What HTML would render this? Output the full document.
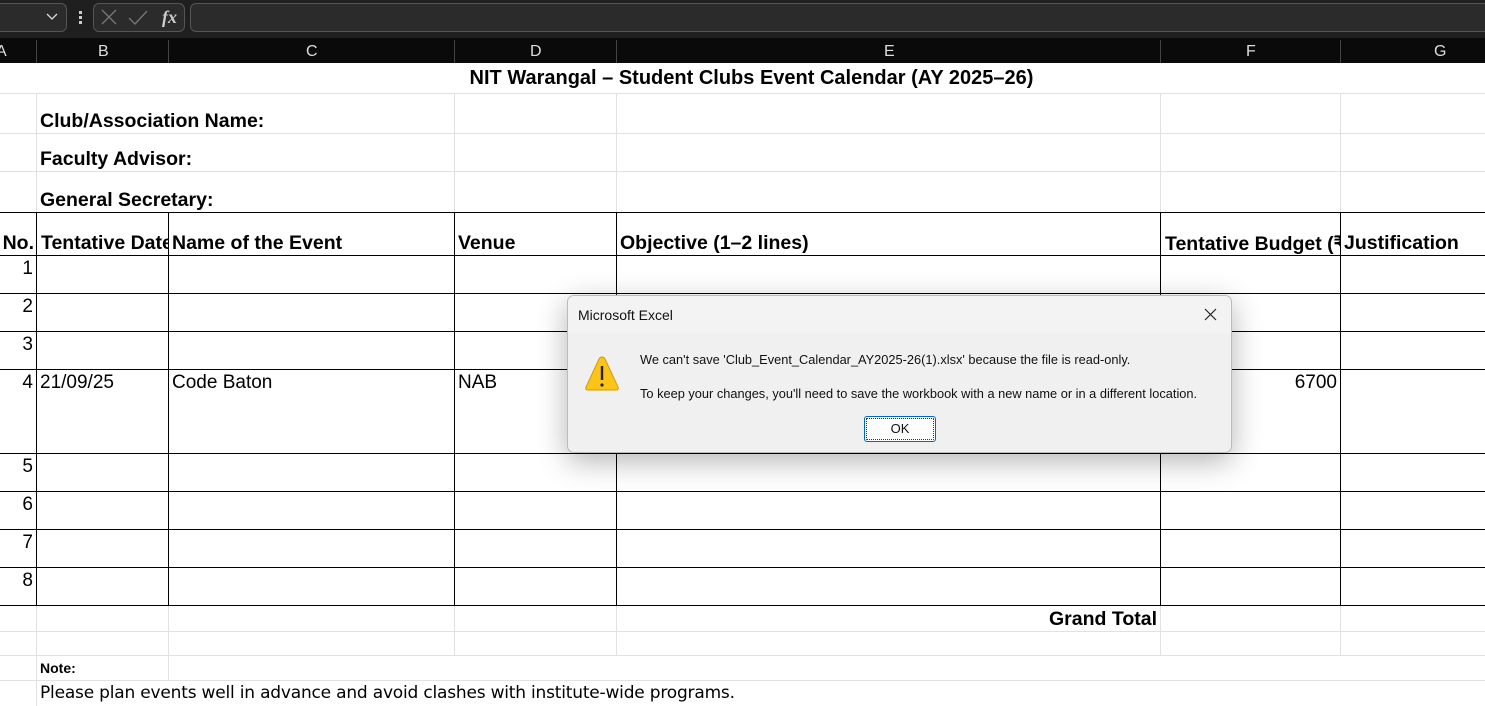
<!DOCTYPE html>
<html><head><meta charset="utf-8"><style>
body{margin:0;width:1485px;height:706px;overflow:hidden;background:#fff;position:relative;font-family:"Liberation Sans",Arial,sans-serif}
div{position:absolute;box-sizing:border-box}
.h{height:1px;background:#000}.v{width:1px;background:#000}
.lh{height:1px;background:#e1e1e1}.lv{width:1px;background:#e1e1e1}
.t{white-space:nowrap;color:#000}
.b{font-weight:bold;font-size:19.5px}
.r{font-size:19px}
.ch{color:#ddd;font-size:16px;top:43px}
</style></head><body>
<div style="left:0;top:0;width:1485px;height:38px;background:#1f1f1f"></div>
<div style="left:-10px;top:3px;width:77px;height:29px;border:1px solid #555;border-radius:6px;background:#2b2b2b"></div>
<svg style="position:absolute;left:46px;top:13px" width="12" height="8"><path d="M1 1 L6 6 L11 1" stroke="#ddd" fill="none" stroke-width="1.3"/></svg>
<div style="left:79px;top:11px;width:3px;height:3px;background:#ccc"></div><div style="left:79px;top:16px;width:3px;height:3px;background:#ccc"></div><div style="left:79px;top:21px;width:3px;height:3px;background:#ccc"></div>
<div style="left:93px;top:3px;width:92px;height:29px;border:1px solid #555;border-radius:6px;background:#2b2b2b"></div>
<svg style="position:absolute;left:100px;top:8px" width="80" height="20"><path d="M2 2 L16 16 M16 2 L2 16" stroke="#777" stroke-width="1.3"/><path d="M29 10 L35 16 L47 3" stroke="#777" fill="none" stroke-width="1.3"/><text x="62" y="15" font-family="Liberation Serif" font-style="italic" font-weight="bold" font-size="18" fill="#ccc">fx</text></svg>
<div style="left:190px;top:3px;width:1300px;height:29px;border:1px solid #555;border-radius:6px;background:#2b2b2b"></div>
<div style="left:0;top:38px;width:1485px;height:25px;background:#0a0a0a"></div>
<div style="left:36px;top:40px;width:1px;height:23px;background:#444"></div>
<div style="left:168px;top:40px;width:1px;height:23px;background:#444"></div>
<div style="left:454px;top:40px;width:1px;height:23px;background:#444"></div>
<div style="left:616px;top:40px;width:1px;height:23px;background:#444"></div>
<div style="left:1160px;top:40px;width:1px;height:23px;background:#444"></div>
<div style="left:1340px;top:40px;width:1px;height:23px;background:#444"></div>
<div class="t ch" style="left:-4px">A</div><div class="t ch" style="left:98px">B</div><div class="t ch" style="left:306px">C</div><div class="t ch" style="left:530px">D</div><div class="t ch" style="left:884px">E</div><div class="t ch" style="left:1246px">F</div><div class="t ch" style="left:1434px">G</div>
<div class="lh" style="left:0;top:93px;width:1485px"></div>
<div class="lh" style="left:0;top:133px;width:1485px"></div>
<div class="lh" style="left:0;top:171px;width:1485px"></div>
<div class="lh" style="left:0;top:631px;width:1485px"></div>
<div class="lh" style="left:0;top:655px;width:1485px"></div>
<div class="lh" style="left:0;top:680px;width:1485px"></div>
<div class="lv" style="left:36px;top:94px;height:118px"></div>
<div class="lv" style="left:454px;top:94px;height:118px"></div>
<div class="lv" style="left:616px;top:94px;height:118px"></div>
<div class="lv" style="left:1160px;top:94px;height:118px"></div>
<div class="lv" style="left:1340px;top:94px;height:118px"></div>
<div class="lv" style="left:36px;top:605px;height:101px"></div>
<div class="lv" style="left:168px;top:605px;height:75px"></div>
<div class="lv" style="left:454px;top:605px;height:50px"></div>
<div class="lv" style="left:616px;top:605px;height:50px"></div>
<div class="lv" style="left:1160px;top:605px;height:50px"></div>
<div class="lv" style="left:1340px;top:605px;height:50px"></div>
<div class="h" style="left:0;top:212px;width:1485px"></div>
<div class="h" style="left:0;top:255px;width:1485px"></div>
<div class="h" style="left:0;top:293px;width:1485px"></div>
<div class="h" style="left:0;top:331px;width:1485px"></div>
<div class="h" style="left:0;top:369px;width:1485px"></div>
<div class="h" style="left:0;top:453px;width:1485px"></div>
<div class="h" style="left:0;top:491px;width:1485px"></div>
<div class="h" style="left:0;top:529px;width:1485px"></div>
<div class="h" style="left:0;top:567px;width:1485px"></div>
<div class="h" style="left:0;top:605px;width:1485px"></div>
<div class="v" style="left:36px;top:212px;height:394px"></div>
<div class="v" style="left:168px;top:212px;height:394px"></div>
<div class="v" style="left:454px;top:212px;height:394px"></div>
<div class="v" style="left:616px;top:212px;height:394px"></div>
<div class="v" style="left:1160px;top:212px;height:394px"></div>
<div class="v" style="left:1340px;top:212px;height:394px"></div>
<div class="t b" style="left:0;width:1485px;text-align:center;top:67px;padding-left:18px;font-size:20px">NIT Warangal – Student Clubs Event Calendar (AY 2025–26)</div>
<div class="t b" style="left:40px;top:110px">Club/Association Name:</div>
<div class="t b" style="left:40px;top:148px">Faculty Advisor:</div>
<div class="t b" style="left:40px;top:189px">General Secretary:</div>
<div class="t b" style="right:1451px;top:232px">No.</div>
<div class="t b" style="left:41px;top:232px;width:127px;overflow:hidden">Tentative Date</div>
<div class="t b" style="left:172px;top:232px">Name of the Event</div>
<div class="t b" style="left:458px;top:232px">Venue</div>
<div class="t b" style="left:620px;top:232px">Objective (1–2 lines)</div>
<div class="t b" style="left:1165px;top:232px;width:175px;overflow:hidden">Tentative Budget (₹)</div>
<div class="t b" style="left:1344px;top:232px">Justification</div>
<div class="t r" style="right:1452px;top:258px">1</div>
<div class="t r" style="right:1452px;top:296px">2</div>
<div class="t r" style="right:1452px;top:334px">3</div>
<div class="t r" style="right:1452px;top:372px">4</div>
<div class="t r" style="right:1452px;top:456px">5</div>
<div class="t r" style="right:1452px;top:494px">6</div>
<div class="t r" style="right:1452px;top:532px">7</div>
<div class="t r" style="right:1452px;top:570px">8</div>
<div class="t r" style="left:40px;top:372px">21/09/25</div>
<div class="t r" style="left:172px;top:372px">Code Baton</div>
<div class="t r" style="left:458px;top:372px">NAB</div>
<div class="t r" style="right:148px;top:372px">6700</div>
<div class="t b" style="right:328px;top:608px">Grand Total</div>
<div class="t" style="left:40px;top:660px;font-size:14px;font-weight:bold">Note:</div>
<div class="t" style="left:40px;top:683px;font-size:17px;font-family:'DejaVu Sans',sans-serif;letter-spacing:-0.2px">Please plan events well in advance and avoid clashes with institute-wide programs.</div>
<div style="left:567px;top:295px;width:665px;height:158px;background:#f0f0f0;border:1px solid #bbb;border-radius:7px;box-shadow:0 8px 30px rgba(0,0,0,.3);overflow:hidden">
<div style="left:0;top:0;width:665px;height:37px;background:#f3f3f3"></div>
<div class="t" style="left:10px;top:11px;font-size:14px;color:#111">Microsoft Excel</div>
<svg style="position:absolute;left:636px;top:12px" width="13" height="13"><path d="M1 1 L12 12 M12 1 L1 12" stroke="#222" stroke-width="1.2"/></svg>
<svg style="position:absolute;left:16px;top:59px" width="36" height="38"><path d="M18 2 Q20 2 21 4 L34 32 Q35 35 32 35 L4 35 Q1 35 2 32 L15 4 Q16 2 18 2Z" fill="#fcc419" stroke="#d49a00"/><path d="M18 11 L18 25" stroke="#222" stroke-width="2.4"/><circle cx="18" cy="30" r="1.6" fill="#222"/></svg>
<div class="t" style="left:72px;top:56px;font-size:12.8px;color:#111">We can't save 'Club_Event_Calendar_AY2025-26(1).xlsx' because the file is read-only.</div>
<div class="t" style="left:72px;top:90px;font-size:12.8px;color:#111">To keep your changes, you'll need to save the workbook with a new name or in a different location.</div>
<div style="left:296px;top:120px;width:72px;height:26px;background:#fdfdfd;border:1px solid #0067c0;border-radius:3px;outline:1px dotted #333;outline-offset:-3px;text-align:center;line-height:24px;font-size:13px;color:#111">OK</div>
</div>
</body></html>
